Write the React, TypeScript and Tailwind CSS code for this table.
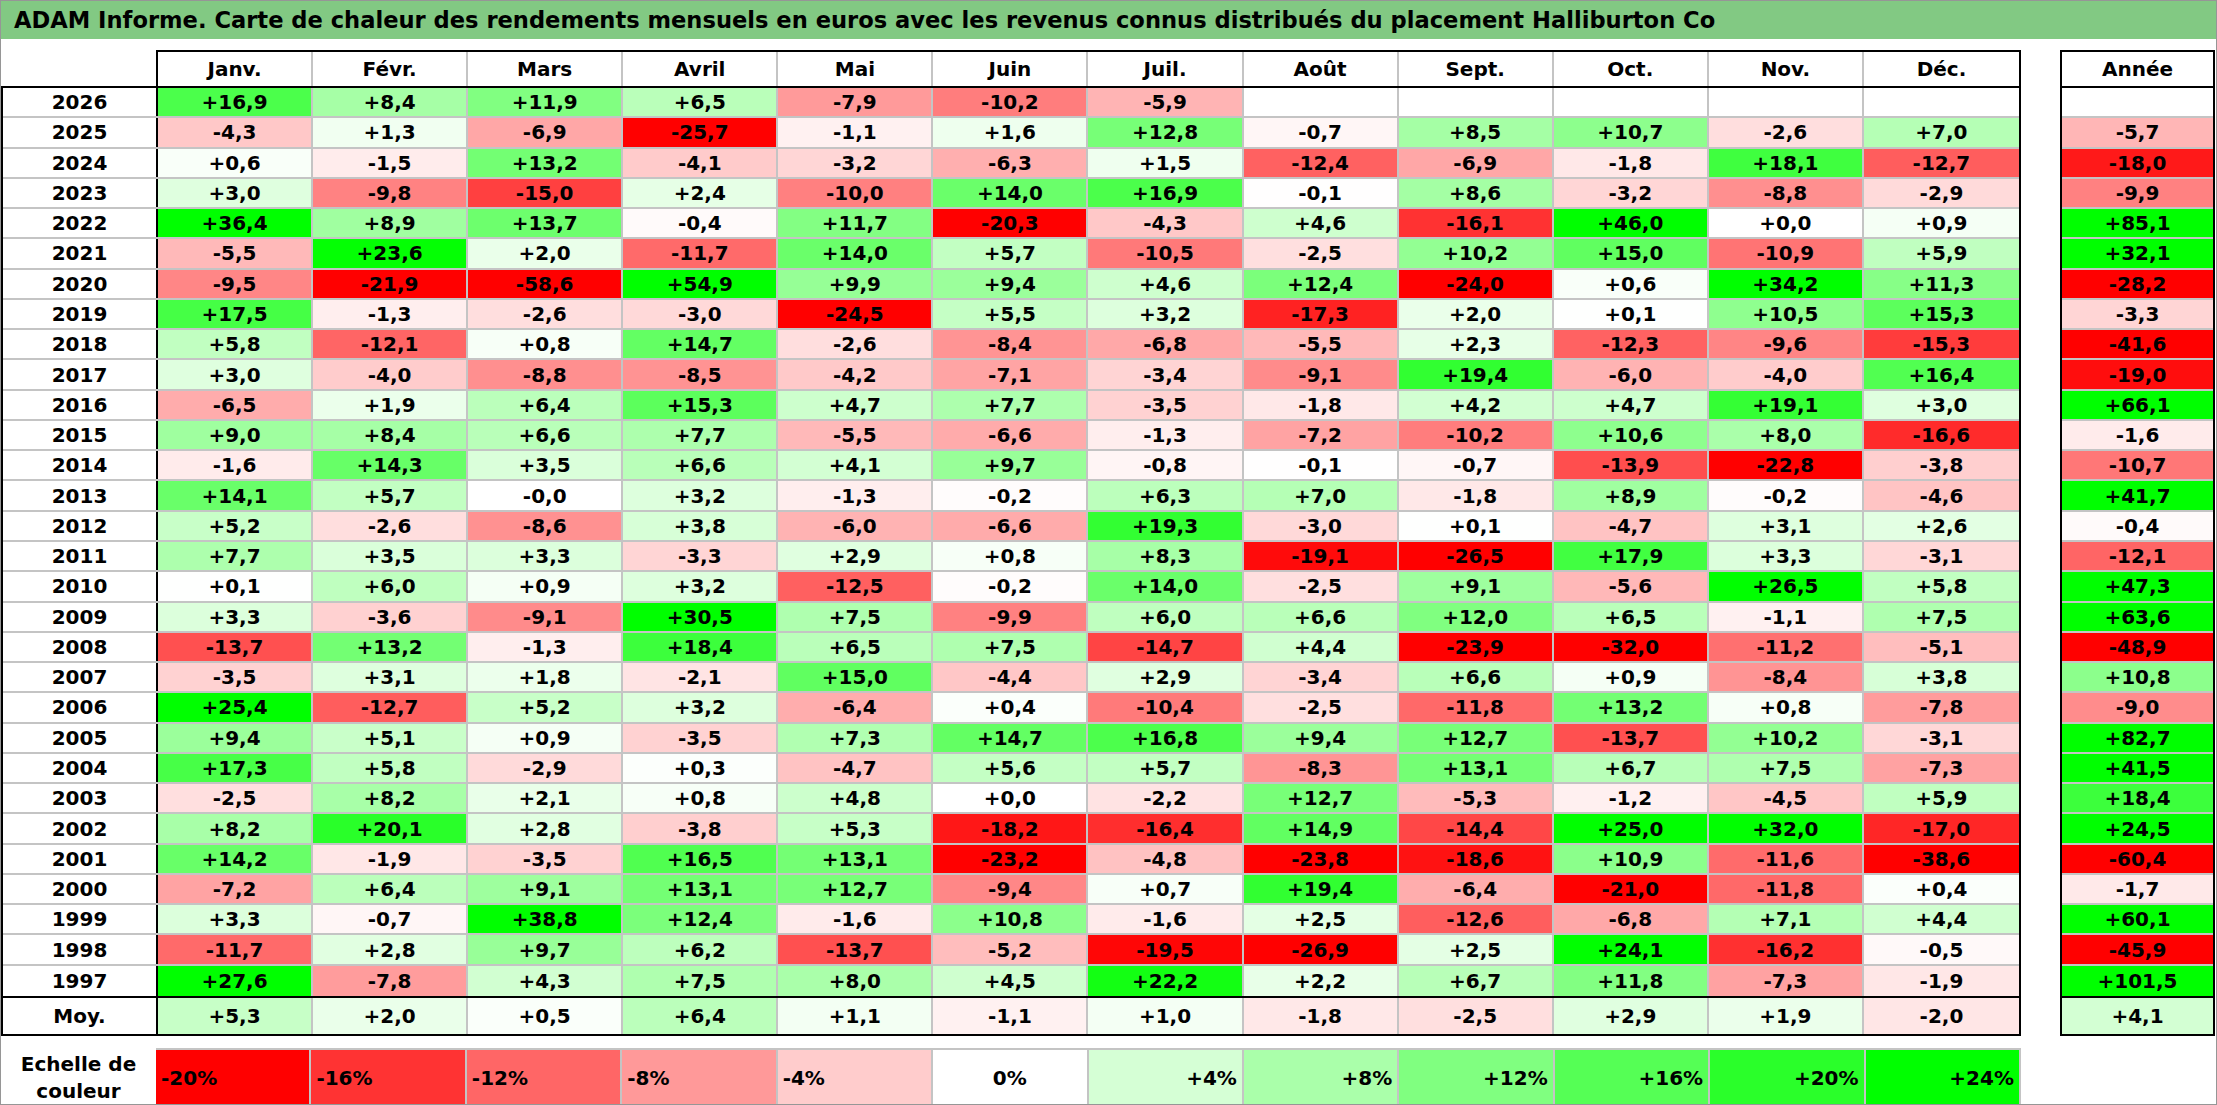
import React from "react";

const MONTHS = ["Janv.", "Févr.", "Mars", "Avril", "Mai", "Juin", "Juil.", "Août", "Sept.", "Oct.", "Nov.", "Déc."];

// year | 12 months | year total ("_" = no data)
const ROWS: [string, string][] = [
  ["2026", "+16,9 +8,4 +11,9 +6,5 -7,9 -10,2 -5,9 _ _ _ _ _ _"],
  ["2025", "-4,3 +1,3 -6,9 -25,7 -1,1 +1,6 +12,8 -0,7 +8,5 +10,7 -2,6 +7,0 -5,7"],
  ["2024", "+0,6 -1,5 +13,2 -4,1 -3,2 -6,3 +1,5 -12,4 -6,9 -1,8 +18,1 -12,7 -18,0"],
  ["2023", "+3,0 -9,8 -15,0 +2,4 -10,0 +14,0 +16,9 -0,1 +8,6 -3,2 -8,8 -2,9 -9,9"],
  ["2022", "+36,4 +8,9 +13,7 -0,4 +11,7 -20,3 -4,3 +4,6 -16,1 +46,0 +0,0 +0,9 +85,1"],
  ["2021", "-5,5 +23,6 +2,0 -11,7 +14,0 +5,7 -10,5 -2,5 +10,2 +15,0 -10,9 +5,9 +32,1"],
  ["2020", "-9,5 -21,9 -58,6 +54,9 +9,9 +9,4 +4,6 +12,4 -24,0 +0,6 +34,2 +11,3 -28,2"],
  ["2019", "+17,5 -1,3 -2,6 -3,0 -24,5 +5,5 +3,2 -17,3 +2,0 +0,1 +10,5 +15,3 -3,3"],
  ["2018", "+5,8 -12,1 +0,8 +14,7 -2,6 -8,4 -6,8 -5,5 +2,3 -12,3 -9,6 -15,3 -41,6"],
  ["2017", "+3,0 -4,0 -8,8 -8,5 -4,2 -7,1 -3,4 -9,1 +19,4 -6,0 -4,0 +16,4 -19,0"],
  ["2016", "-6,5 +1,9 +6,4 +15,3 +4,7 +7,7 -3,5 -1,8 +4,2 +4,7 +19,1 +3,0 +66,1"],
  ["2015", "+9,0 +8,4 +6,6 +7,7 -5,5 -6,6 -1,3 -7,2 -10,2 +10,6 +8,0 -16,6 -1,6"],
  ["2014", "-1,6 +14,3 +3,5 +6,6 +4,1 +9,7 -0,8 -0,1 -0,7 -13,9 -22,8 -3,8 -10,7"],
  ["2013", "+14,1 +5,7 -0,0 +3,2 -1,3 -0,2 +6,3 +7,0 -1,8 +8,9 -0,2 -4,6 +41,7"],
  ["2012", "+5,2 -2,6 -8,6 +3,8 -6,0 -6,6 +19,3 -3,0 +0,1 -4,7 +3,1 +2,6 -0,4"],
  ["2011", "+7,7 +3,5 +3,3 -3,3 +2,9 +0,8 +8,3 -19,1 -26,5 +17,9 +3,3 -3,1 -12,1"],
  ["2010", "+0,1 +6,0 +0,9 +3,2 -12,5 -0,2 +14,0 -2,5 +9,1 -5,6 +26,5 +5,8 +47,3"],
  ["2009", "+3,3 -3,6 -9,1 +30,5 +7,5 -9,9 +6,0 +6,6 +12,0 +6,5 -1,1 +7,5 +63,6"],
  ["2008", "-13,7 +13,2 -1,3 +18,4 +6,5 +7,5 -14,7 +4,4 -23,9 -32,0 -11,2 -5,1 -48,9"],
  ["2007", "-3,5 +3,1 +1,8 -2,1 +15,0 -4,4 +2,9 -3,4 +6,6 +0,9 -8,4 +3,8 +10,8"],
  ["2006", "+25,4 -12,7 +5,2 +3,2 -6,4 +0,4 -10,4 -2,5 -11,8 +13,2 +0,8 -7,8 -9,0"],
  ["2005", "+9,4 +5,1 +0,9 -3,5 +7,3 +14,7 +16,8 +9,4 +12,7 -13,7 +10,2 -3,1 +82,7"],
  ["2004", "+17,3 +5,8 -2,9 +0,3 -4,7 +5,6 +5,7 -8,3 +13,1 +6,7 +7,5 -7,3 +41,5"],
  ["2003", "-2,5 +8,2 +2,1 +0,8 +4,8 +0,0 -2,2 +12,7 -5,3 -1,2 -4,5 +5,9 +18,4"],
  ["2002", "+8,2 +20,1 +2,8 -3,8 +5,3 -18,2 -16,4 +14,9 -14,4 +25,0 +32,0 -17,0 +24,5"],
  ["2001", "+14,2 -1,9 -3,5 +16,5 +13,1 -23,2 -4,8 -23,8 -18,6 +10,9 -11,6 -38,6 -60,4"],
  ["2000", "-7,2 +6,4 +9,1 +13,1 +12,7 -9,4 +0,7 +19,4 -6,4 -21,0 -11,8 +0,4 -1,7"],
  ["1999", "+3,3 -0,7 +38,8 +12,4 -1,6 +10,8 -1,6 +2,5 -12,6 -6,8 +7,1 +4,4 +60,1"],
  ["1998", "-11,7 +2,8 +9,7 +6,2 -13,7 -5,2 -19,5 -26,9 +2,5 +24,1 -16,2 -0,5 -45,9"],
  ["1997", "+27,6 -7,8 +4,3 +7,5 +8,0 +4,5 +22,2 +2,2 +6,7 +11,8 -7,3 -1,9 +101,5"],
];
const AVG = "+5,3 +2,0 +0,5 +6,4 +1,1 -1,1 +1,0 -1,8 -2,5 +2,9 +1,9 -2,0 +4,1".split(" ");

const SCALE = [-20, -16, -12, -8, -4, 0, 4, 8, 12, 16, 20, 24];

function heat(v: number | null) {
  if (v === null) return "#ffffff";
  if (v < 0) {
    const c = Math.round(255 * (1 - Math.min(1, -v / 20)));
    return `rgb(255,${c},${c})`;
  }
  const c = Math.round(255 * (1 - Math.min(1, v / 24)));
  return `rgb(${c},255,${c})`;
}

const parse = (s: string) => (s === "_" ? null : parseFloat(s.replace(",", ".")));

function Cell({ value, last }: { value: string; last?: boolean }) {
  return (
    <div
      className={`flex items-center justify-center ${last ? "" : "border-r-2 border-[#c4c4c4]"}`}
      style={{ backgroundColor: heat(parse(value)) }}
    >
      {value === "_" ? "" : value}
    </div>
  );
}

export default function App() {
  return (
    <div className="w-[2217px] h-[1105px] bg-white border border-[#969696] text-black font-bold text-[20px] leading-none font-['DejaVu_Sans',sans-serif] overflow-hidden">
      <div className="h-[38px] bg-[#82c983] flex items-center pl-[13px] text-[22.6px]">
        ADAM Informe. Carte de chaleur des rendements mensuels en euros avec les revenus connus distribués du placement Halliburton Co
      </div>

      <div className="mt-[11px] flex">
        {/* monthly table */}
        <div className="w-[2020px]">
          <div className="flex h-[38px]">
            <div className="w-[155px] border-b-2 border-black" />
            <div className="flex-1 grid grid-cols-12 border-2 border-black">
              {MONTHS.map((m, i) => (
                <div key={m} className={`flex items-center justify-center ${i < 11 ? "border-r-2 border-[#c4c4c4]" : ""}`}>
                  {m}
                </div>
              ))}
            </div>
          </div>

          <div className="border-x-2 border-b-2 border-black">
            {ROWS.map(([year, vals], r) => {
              const cells = vals.split(" ");
              return (
                <div key={year} className={`flex h-[30.27px] ${r < ROWS.length - 1 ? "border-b-2 border-[#c4c4c4]" : ""}`}>
                  <div className="w-[155px] border-r-2 border-black flex items-center justify-center">{year}</div>
                  <div className="flex-1 grid grid-cols-12">
                    {cells.slice(0, 12).map((c, i) => (
                      <Cell key={i} value={c} last={i === 11} />
                    ))}
                  </div>
                </div>
              );
            })}
            <div className="flex h-[38px] border-t-2 border-black">
              <div className="w-[155px] border-r-2 border-black flex items-center justify-center">Moy.</div>
              <div className="flex-1 grid grid-cols-12">
                {AVG.slice(0, 12).map((c, i) => (
                  <Cell key={i} value={c} last={i === 11} />
                ))}
              </div>
            </div>
          </div>

          <div className="mt-[12px] flex h-[57px]">
            <div className="w-[155px] flex flex-col items-center justify-center gap-[7px] pt-[2px]">
              <span>Echelle de</span>
              <span>couleur</span>
            </div>
            <div className="flex-1 grid grid-cols-12 border-t-2 border-[#c4c4c4]">
              {SCALE.map((v) => (
                <div
                  key={v}
                  className={`flex items-center px-[5px] pt-[2px] border-r-2 border-[#c4c4c4] ${
                    v < 0 ? "justify-start" : v === 0 ? "justify-center" : "justify-end"
                  }`}
                  style={{ backgroundColor: heat(v) }}
                >
                  {v > 0 ? `+${v}%` : `${v}%`}
                </div>
              ))}
            </div>
          </div>
        </div>

        {/* yearly totals */}
        <div className="ml-[39px] w-[155px]">
          <div className="h-[38px] border-2 border-black flex items-center justify-center">Année</div>
          <div className="border-x-2 border-b-2 border-black">
            {ROWS.map(([year, vals], r) => {
              const total = vals.split(" ")[12];
              return (
                <div
                  key={year}
                  className={`h-[30.27px] flex items-center justify-center ${r < ROWS.length - 1 ? "border-b-2 border-[#c4c4c4]" : ""}`}
                  style={{ backgroundColor: heat(parse(total)) }}
                >
                  {total === "_" ? "" : total}
                </div>
              );
            })}
            <div className="h-[38px] border-t-2 border-black flex items-center justify-center" style={{ backgroundColor: heat(parse(AVG[12])) }}>
              {AVG[12]}
            </div>
          </div>
        </div>
      </div>
    </div>
  );
}
